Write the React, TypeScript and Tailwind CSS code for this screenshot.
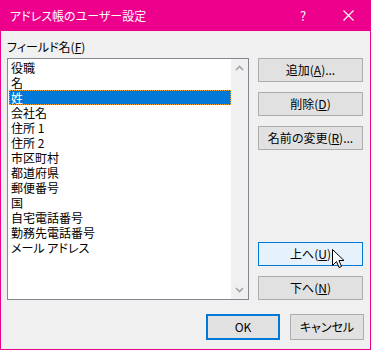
import React from "react";

const font = { fontFamily: '"Noto Sans CJK JP", "Noto Sans", sans-serif' };

const items = [
  "役職",
  "名",
  "姓",
  "会社名",
  "住所 1",
  "住所 2",
  "市区町村",
  "都道府県",
  "郵便番号",
  "国",
  "自宅電話番号",
  "勤務先電話番号",
  "メール アドレス",
];

function Btn({ children, variant }: { children: React.ReactNode; variant?: "hover" }) {
  const cls =
    variant === "hover"
      ? "bg-[#E5F1FB] border-[#0078D7]"
      : "bg-[#E1E1E1] border-[#ADADAD]";
  return (
    <div
      className={`h-[24px] w-[105px] border flex items-center justify-center text-[12px] text-black leading-none ${cls}`}
    >
      {children}
    </div>
  );
}

export default function App() {
  return (
    <div
      className="relative w-[371px] h-[350px] bg-[#F0F0F0] border-x border-b border-[#EC008C] flex flex-col [font-feature-settings:'palt']"
      style={font}
    >
      {/* Title bar */}
      <div className="h-[31px] bg-[#EC008C] flex items-center text-white text-[12px] shrink-0 -mx-px">
        <div className="pl-[10px] flex-1">アドレス帳のユーザー設定</div>
        <div className="w-[30px] text-center text-[13px]">?</div>
        <div className="w-[46px] flex items-center justify-center ml-[7px]">
          <svg width="11" height="11" viewBox="0 0 11 11">
            <path d="M0.5 0.5 L10.5 10.5 M10.5 0.5 L0.5 10.5" stroke="white" strokeWidth="1.2" />
          </svg>
        </div>
      </div>

      {/* Body */}
      <div className="flex flex-col pl-[6px] pr-[6px] pt-[8px]">
        <div className="h-[15px] text-[12px] leading-[15px] text-black">
          フィールド名(<u>F</u>)
        </div>
        <div className="flex mt-[4px] gap-[9px]">
          {/* List box */}
          <div className="w-[242px] h-[242px] border border-[#828790] bg-white flex">
            <div className="flex-1 pt-[1px] pl-[1px]">
              {items.map((it, i) =>
                i === 2 ? (
                  <div
                    key={i}
                    className="h-[15px] leading-[15px] text-[12px] pl-[2px] bg-[#0078D7] text-white outline outline-1 outline-dotted outline-[#F5A623] -outline-offset-1"
                  >
                    {it}
                  </div>
                ) : (
                  <div key={i} className="h-[15px] leading-[15px] text-[12px] pl-[2px] text-black">
                    {it}
                  </div>
                )
              )}
            </div>
            <div className="w-[17px] bg-[#F0F0F0] flex flex-col items-center justify-between py-[6px]">
              <svg width="9" height="6" viewBox="0 0 9 6">
                <path d="M1 5 L4.5 1.5 L8 5" stroke="#A3A3A3" strokeWidth="1.6" fill="none" />
              </svg>
              <svg width="9" height="6" viewBox="0 0 9 6">
                <path d="M1 1 L4.5 4.5 L8 1" stroke="#A3A3A3" strokeWidth="1.6" fill="none" />
              </svg>
            </div>
          </div>

          {/* Buttons */}
          <div className="flex flex-col justify-between h-[242px]">
            <div className="flex flex-col gap-[10px]">
              <Btn>
                追加(<u>A</u>)...
              </Btn>
              <Btn>
                削除(<u>D</u>)
              </Btn>
              <Btn>
                名前の変更(<u>R</u>)...
              </Btn>
            </div>
            <div className="flex flex-col gap-[10px]">
              <Btn variant="hover">
                上へ(<u>U</u>)
              </Btn>
              <Btn>
                下へ(<u>N</u>)
              </Btn>
            </div>
          </div>
        </div>

        {/* Bottom buttons */}
        <div className="flex justify-end gap-[10px] mt-[14px]">
          <div className="h-[26px] w-[74px] border-2 border-[#0078D7] bg-[#E1E1E1] flex items-center justify-center text-[12px] text-black">
            OK
          </div>
          <div className="h-[26px] w-[74px] border border-[#ADADAD] bg-[#E1E1E1] flex items-center justify-center text-[12px] text-black">
            キャンセル
          </div>
        </div>
      </div>

      {/* Mouse cursor */}
      <svg
        className="absolute left-[331px] top-[249px]"
        width="13"
        height="21"
        viewBox="0 0 13 21"
      >
        <path
          d="M0.5 0.5 L0.5 16.5 L4.5 12.5 L7 18.5 L9.5 17.5 L7 11.5 L12 11.5 Z"
          fill="white"
          stroke="black"
          strokeWidth="1"
        />
      </svg>
    </div>
  );
}
